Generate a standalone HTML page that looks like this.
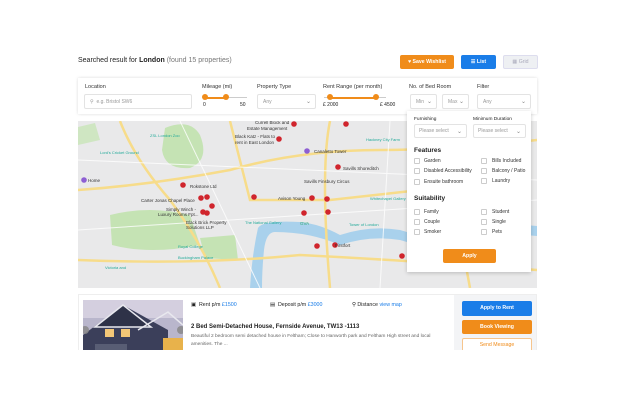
<!DOCTYPE html>
<html><head><meta charset="utf-8"><style>
*{box-sizing:border-box;margin:0;padding:0}
body{width:617px;height:415px;background:#fff;font-family:"Liberation Sans",sans-serif;position:relative;overflow:hidden;color:#222}
.a{position:absolute}
.lbl{font-size:5.5px;color:#333}
.inp{border:1px solid #e3e3e3;border-radius:2px;height:15px;font-size:5px;color:#999;padding:4px 5px;background:#fff}
.chev{position:absolute;right:4px;top:3px;font-size:6px;color:#888}
.cb{width:6px;height:6px;border:1px solid #ccc;border-radius:1px;position:absolute}
.ft{font-size:5px;color:#333;position:absolute}
.btn{position:absolute;border-radius:2px;font-size:5.2px;color:#fff;text-align:center;font-weight:bold}
.pin{fill:#d0252d}
</style></head><body>
<div class="a" style="left:78px;top:57px;font-size:7px;color:#222">Searched result for <b>London</b> <span style="color:#777">(found 15 properties)</span></div>
<div class="btn" style="left:400px;top:55px;width:54px;height:14px;background:#f08c1a;line-height:14px">♥ Save Wishlist</div>
<div class="btn" style="left:461px;top:55px;width:35px;height:14px;background:#1a7de8;line-height:14px">☰ List</div>
<div class="btn" style="left:503px;top:55px;width:35px;height:14px;background:#eef0f3;color:#aab;border:1px solid #dde;line-height:12px;font-weight:normal">▦ Grid</div>

<div class="a" style="left:78px;top:78px;width:459px;height:36px;background:#fff;box-shadow:0 0 3px rgba(0,0,0,.15)"></div>
<div class="a lbl" style="left:85px;top:84px">Location</div>
<div class="a inp" style="left:84px;top:94px;width:108px">⚲ &nbsp;e.g. Bristol SW6</div>
<div class="a lbl" style="left:202px;top:84px">Mileage (mi)</div>
<div class="a" style="left:204px;top:97px;width:43px;height:1px;background:#ccc"></div>
<div class="a" style="left:204px;top:97px;width:22px;height:1.5px;background:#f08c1a"></div>
<div class="a" style="left:202px;top:94px;width:6px;height:6px;border-radius:50%;background:#f08c1a"></div>
<div class="a" style="left:223px;top:94px;width:6px;height:6px;border-radius:50%;background:#f08c1a"></div>
<div class="a" style="left:203px;top:102px;font-size:5px">0</div>
<div class="a" style="left:240px;top:102px;font-size:5px">50</div>
<div class="a lbl" style="left:257px;top:84px">Property Type</div>
<div class="a inp" style="left:257px;top:94px;width:59px">Any<span class="chev">⌄</span></div>
<div class="a lbl" style="left:323px;top:84px">Rent Range (per month)</div>
<div class="a" style="left:324px;top:97px;width:62px;height:1px;background:#ccc"></div>
<div class="a" style="left:330px;top:97px;width:46px;height:1.5px;background:#f08c1a"></div>
<div class="a" style="left:327px;top:94px;width:6px;height:6px;border-radius:50%;background:#f08c1a"></div>
<div class="a" style="left:373px;top:94px;width:6px;height:6px;border-radius:50%;background:#f08c1a"></div>
<div class="a" style="left:323px;top:102px;font-size:5px">£ 2000</div>
<div class="a" style="left:380px;top:102px;font-size:5px">£ 4500</div>
<div class="a lbl" style="left:409px;top:84px">No. of Bed Room</div>
<div class="a inp" style="left:410px;top:94px;width:27px">Min<span class="chev">⌄</span></div>
<div class="a inp" style="left:442px;top:94px;width:27px">Max<span class="chev">⌄</span></div>
<div class="a lbl" style="left:477px;top:84px">Filter</div>
<div class="a inp" style="left:477px;top:94px;width:54px">Any<span class="chev">⌄</span></div>

<svg class="a" style="left:78px;top:121px" width="459" height="167" viewBox="78 121 459 167">
<rect x="78" y="121" width="459" height="167" fill="#e9e9ea"/>
<path d="M165 128 Q190 118 200 135 Q210 160 190 168 Q165 170 162 150Z" fill="#c5e3b4"/>
<path d="M110 215 Q150 205 190 215 L200 245 Q150 255 112 245Z" fill="#c5e3b4"/>
<path d="M200 238 L235 235 L238 260 L205 258Z" fill="#c5e3b4"/>
<path d="M78 127 L95 123 L100 140 L78 145Z" fill="#cfe6c2"/>
<path d="M250 288 Q252 255 258 228 Q262 220 300 222 Q320 224 340 235 Q370 225 400 230 Q430 240 460 232 Q500 222 537 226 L537 236 Q500 232 465 242 Q430 250 400 240 Q370 235 340 245 Q310 232 275 232 Q266 232 264 250 Q262 270 262 288Z" fill="#a9d1ec"/>
<g stroke="#f7dc8a" stroke-width="2.5" fill="none">
<path d="M78 190 Q150 185 230 170 Q300 150 380 150 Q450 150 537 140"/>
<path d="M120 121 Q135 160 170 200 Q200 240 220 288"/>
<path d="M330 121 Q320 170 330 288"/>
<path d="M440 121 Q450 180 470 288"/>
<path d="M78 260 Q200 265 300 255 Q400 260 537 270"/>
<path d="M230 121 L250 200 L330 200 L420 190"/>
</g>
<g stroke="#fff" stroke-width="1" fill="none" opacity=".8">
<path d="M78 230 L537 200"/><path d="M180 121 L260 288"/><path d="M390 121 L380 288"/><path d="M78 160 L537 180"/>
</g>
<g class="pin">
<circle cx="294" cy="124" r="2.8"/><circle cx="346" cy="124" r="2.8"/><circle cx="279" cy="139" r="2.8"/><circle cx="338" cy="167" r="2.8"/><circle cx="183" cy="185" r="2.8"/><circle cx="254" cy="197" r="2.8"/><circle cx="327" cy="199" r="2.8"/><circle cx="312" cy="198" r="2.8"/><circle cx="201" cy="198" r="2.8"/><circle cx="207" cy="197" r="2.8"/><circle cx="212" cy="206" r="2.8"/><circle cx="203" cy="212" r="2.8"/><circle cx="207" cy="213" r="2.8"/><circle cx="304" cy="213" r="2.8"/><circle cx="328" cy="212" r="2.8"/><circle cx="317" cy="246" r="2.8"/><circle cx="335" cy="245" r="2.8"/><circle cx="402" cy="256" r="2.8"/>
</g>
<circle cx="84" cy="180" r="2.8" fill="#8e5fd3"/><circle cx="307" cy="151" r="2.8" fill="#8e5fd3"/>
<g font-size="4.5" fill="#333" font-family="Liberation Sans">
<text x="255" y="124">Currell Block and</text><text x="247" y="130">Estate Management</text>
<text x="235" y="138">Black Katz - Flats to</text><text x="235" y="144">rent in East London</text>
<text x="314" y="153">Canaletto Tower</text><text x="343" y="170">Savills Shoreditch</text>
<text x="304" y="183">Savills Finsbury Circus</text><text x="278" y="200">Avison Young</text>
<text x="190" y="188">Rokstone Ltd</text><text x="141" y="202">Carter Jonas Chapel Place</text>
<text x="166" y="211">Simply Winch -</text><text x="158" y="216">Luxury Rooms Fpt...</text>
<text x="186" y="224">Black Brick Property</text><text x="186" y="229">Solutions LLP</text>
<text x="88" y="182">Home</text><text x="335" y="247">Firstfort</text>
<text x="300" y="225" fill="#3a7">GVA</text>
</g>
<g font-size="4" fill="#2a9" font-family="Liberation Sans">
<text x="150" y="137">ZSL London Zoo</text><text x="100" y="154">Lord's Cricket Ground</text><text x="245" y="224">The National Gallery</text><text x="178" y="248">Royal College</text><text x="105" y="269">Victoria and</text><text x="178" y="259">Buckingham Palace</text><text x="366" y="141">Hackney City Farm</text><text x="370" y="200">Whitechapel Gallery</text><text x="349" y="226">Tower of London</text>
</g>
</svg>

<div class="a" style="left:407px;top:111px;width:124px;height:161px;background:#fff;box-shadow:0 1px 4px rgba(0,0,0,.2)"></div>
<div class="a" style="left:414px;top:117px;font-size:4.8px">Furnishing</div>
<div class="a" style="left:473px;top:117px;font-size:4.8px">Minimum Duration</div>
<div class="a inp" style="left:414px;top:124px;width:53px;height:14px;padding:3px 4px">Please select<span class="chev">⌄</span></div>
<div class="a inp" style="left:473px;top:124px;width:53px;height:14px;padding:3px 4px">Please select<span class="chev">⌄</span></div>
<div class="a" style="left:414px;top:147px;font-size:6.5px;font-weight:bold">Features</div>
<div class="cb" style="left:414px;top:158px"></div><div class="ft" style="left:424px;top:158px">Garden</div>
<div class="cb" style="left:414px;top:168px"></div><div class="ft" style="left:424px;top:168px">Disabled Accessibility</div>
<div class="cb" style="left:414px;top:179px"></div><div class="ft" style="left:424px;top:179px">Ensuite bathroom</div>
<div class="cb" style="left:481px;top:158px"></div><div class="ft" style="left:492px;top:158px">Bills Included</div>
<div class="cb" style="left:481px;top:168px"></div><div class="ft" style="left:492px;top:168px">Balcony / Patio</div>
<div class="cb" style="left:481px;top:178px"></div><div class="ft" style="left:492px;top:178px">Laundry</div>
<div class="a" style="left:414px;top:195px;font-size:6.5px;font-weight:bold">Suitability</div>
<div class="cb" style="left:414px;top:209px"></div><div class="ft" style="left:424px;top:209px">Family</div>
<div class="cb" style="left:414px;top:219px"></div><div class="ft" style="left:424px;top:219px">Couple</div>
<div class="cb" style="left:414px;top:229px"></div><div class="ft" style="left:424px;top:229px">Smoker</div>
<div class="cb" style="left:481px;top:209px"></div><div class="ft" style="left:492px;top:209px">Student</div>
<div class="cb" style="left:481px;top:219px"></div><div class="ft" style="left:492px;top:219px">Single</div>
<div class="cb" style="left:481px;top:229px"></div><div class="ft" style="left:492px;top:229px">Pets</div>
<div class="btn" style="left:443px;top:249px;width:53px;height:14px;background:#f08c1a;line-height:14px">Apply</div>

<div class="a" style="left:78px;top:294px;width:459px;height:56px;overflow:hidden;border-top:1px solid #eee;border-left:1px solid #eee;border-right:1px solid #eee">
<div class="a" style="left:375px;top:0;width:84px;height:60px;background:#f3f4f6"></div>
<svg class="a" style="left:4px;top:5px" width="100" height="55" viewBox="0 0 100 55">
<rect width="100" height="55" fill="#b9b6cc"/>
<rect width="100" height="18" fill="#d4cfdf"/>
<path d="M0 35 L40 5 L85 30 L85 55 L0 55Z" fill="#3b3f5a"/>
<path d="M40 5 L12 27 L68 27Z" fill="#2e3248" stroke="#e8e8ee" stroke-width="1.5"/>
<path d="M55 30 L85 12 L100 25" fill="none" stroke="#e8e8ee" stroke-width="1.5"/>
<rect x="22" y="29" width="9" height="8" fill="#f3c777"/><rect x="38" y="29" width="9" height="8" fill="#f3c777"/>
<rect x="12" y="44" width="32" height="11" fill="#585d74"/>
<rect x="80" y="38" width="20" height="17" fill="#e8b24b"/>
<circle cx="2" cy="30" r="4" fill="#888" opacity=".85"/><circle cx="98" cy="30" r="4" fill="#888" opacity=".85"/>
</svg>
<div class="a" style="left:112px;top:7px;font-size:5.3px">▣ &nbsp;Rent p/m <span style="color:#1a7de8">£1500</span></div>
<div class="a" style="left:191px;top:7px;font-size:5.3px">▤ &nbsp;Deposit p/m <span style="color:#1a7de8">£3000</span></div>
<div class="a" style="left:273px;top:7px;font-size:5.3px">⚲ Distance <span style="color:#1a7de8">view map</span></div>
<div class="a" style="left:112px;top:29px;font-size:6px;font-weight:bold">2 Bed Semi-Detached House, Fernside Avenue, TW13 -1113</div>
<div class="a" style="left:112px;top:38px;width:260px;font-size:4.8px;color:#666;line-height:8px">Beautiful 2 bedroom semi detached house in Feltham; Close to Hanworth park and Feltham High street and local amenities. The ...</div>
<div class="btn" style="left:383px;top:6px;width:70px;height:15px;background:#1a7de8;line-height:15px">Apply to Rent</div>
<div class="btn" style="left:383px;top:25px;width:70px;height:14px;background:#f08c1a;line-height:14px">Book Viewing</div>
<div class="btn" style="left:383px;top:43px;width:70px;height:14px;background:#fff;border:1px solid #f6c58d;color:#f08c1a;line-height:12px;font-weight:normal">Send Message</div>
</div>
</body></html>
